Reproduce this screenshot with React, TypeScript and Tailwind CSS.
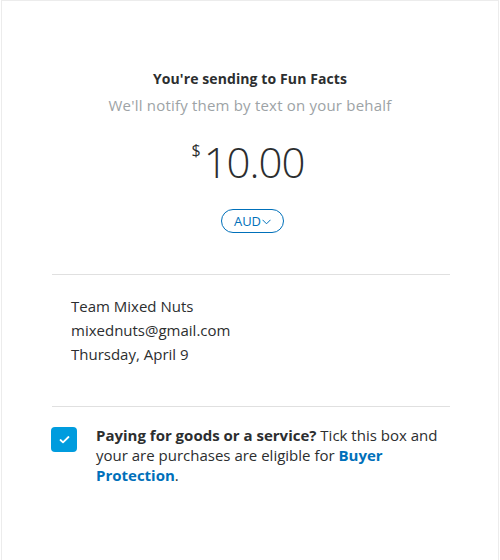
import React from "react";

export default function App() {
  return (
    <div className="w-[500px] h-[560px] bg-white overflow-hidden">
      <div className="ml-px mr-px h-[560px] border-l border-t border-r border-[#ececec] text-[#2c2e2f] font-['Open_Sans',sans-serif]">
        <div className="pt-[67px] flex flex-col items-center">
          <div className="text-[14px] font-bold leading-[22px] tracking-[0.1px]">You're sending to Fun Facts</div>
          <div className="text-[15px] text-[#9da3a6] leading-[22px] mt-[4px] tracking-[0.2px]">We'll notify them by text on your behalf</div>
          <div className="flex items-start mt-[18px] ml-[-4px]">
            <span className="text-[16px] leading-[16px] mt-[8px] mr-[3px] font-normal">$</span>
            <span className="text-[42px] leading-[56px] font-light tracking-[-1px]">10.00</span>
          </div>
          <button className="mt-[19px] ml-[5px] h-[24px] px-[12px] rounded-full border border-[#0070ba] text-[#0070ba] text-[13px] flex items-center leading-none">
            AUD
            <svg width="9" height="6" viewBox="0 0 9 6" className="ml-[1px] mt-[2px]">
              <path d="M0.5 0.8 L4.5 4.8 L8.5 0.8" fill="none" stroke="#0070ba" strokeWidth="1" />
            </svg>
          </button>
        </div>
        <div className="ml-[50px] w-[398px] mt-[41px] border-t border-[#e0e0e0]" />
        <div className="px-[69px] pt-[19px] pb-[40px] text-[15px] leading-[24px]">
          <div>Team Mixed Nuts</div>
          <div>mixednuts@gmail.com</div>
          <div>Thursday, April 9</div>
        </div>
        <div className="ml-[50px] w-[398px] border-t border-[#e0e0e0]" />
        <div className="flex pl-[49px] pt-[18px] gap-[19px]">
          <div className="w-[26px] h-[25px] shrink-0 rounded-[4px] bg-[#009cde] flex items-center justify-center mt-[2px]">
            <svg width="11" height="9" viewBox="0 0 11 9">
              <path d="M1.5 5 L4 7.3 L9.5 2" fill="none" stroke="white" strokeWidth="1.8" strokeLinecap="round" strokeLinejoin="round" />
            </svg>
          </div>
          <div className="text-[15px] leading-[20px] w-[360px]">
            <span className="font-bold">Paying for goods or a service?</span> Tick this box and your are purchases are eligible for{" "}
            <span className="font-bold text-[#0070ba]">Buyer Protection</span>.
          </div>
        </div>
      </div>
    </div>
  );
}
